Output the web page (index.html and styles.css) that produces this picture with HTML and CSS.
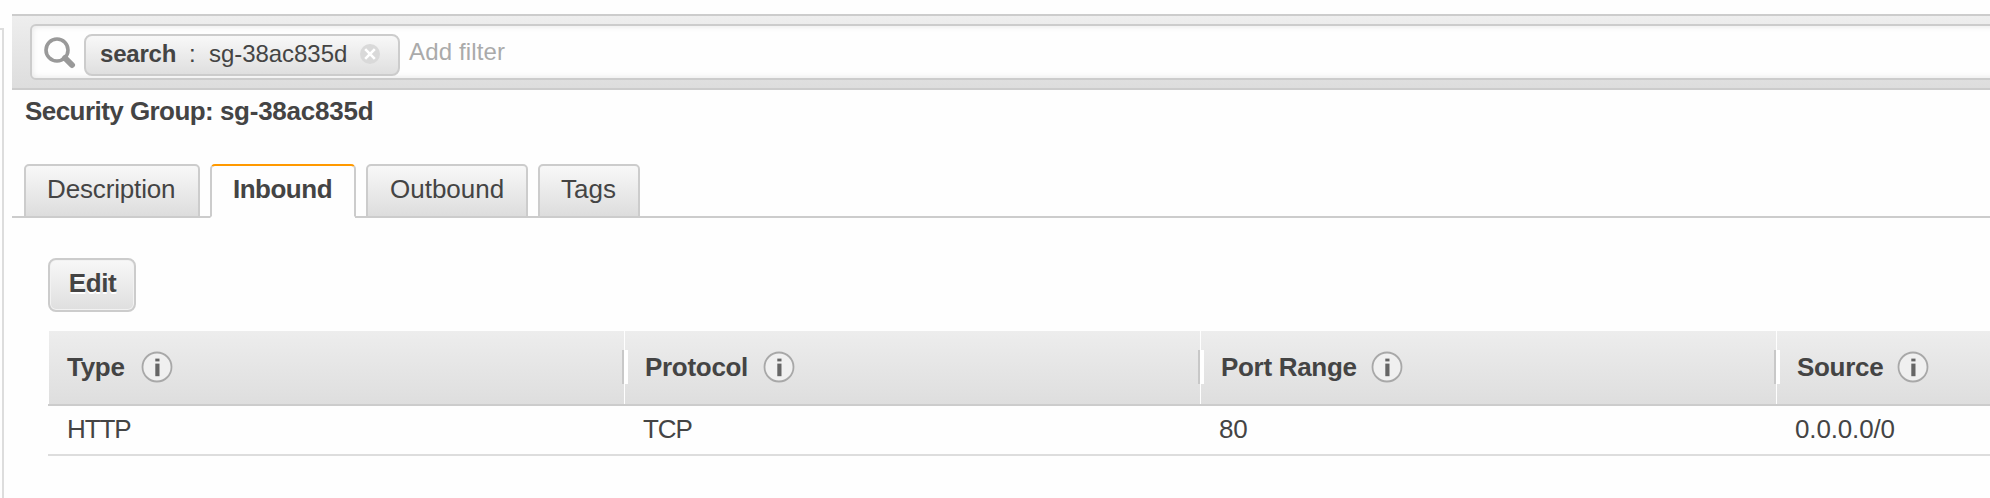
FILE: index.html
```html
<!DOCTYPE html>
<html lang="en">
<head>
<meta charset="utf-8">
<title>Security Groups</title>
<link rel="stylesheet" href="styles.css">
</head>
<body>
<svg class="defs" aria-hidden="true">
  <symbol id="info" viewBox="0 0 32 32">
    <circle cx="16" cy="16" r="14.5" fill="#f0f0f0" stroke="#a8a8a8" stroke-width="1.8"/>
    <rect x="14.3" y="7.6" width="4.2" height="2.8" fill="#666"/>
    <rect x="14.3" y="12.6" width="4.2" height="12.6" fill="#666"/>
  </symbol>
</svg>
<div class="app">
  <div class="side-edge"></div>
  <main class="content">
    <div class="toolbar">
      <div class="search-box">
        <svg class="search-icon" viewBox="0 0 32 32">
          <circle cx="13" cy="13" r="11" fill="none" stroke="#999" stroke-width="3.6"/>
          <path d="M21 21 L28 28" stroke="#999" stroke-width="6" stroke-linecap="round"/>
        </svg>
        <div class="chip">
          <span class="chip-key">search</span>
          <span class="chip-colon">:</span>
          <span class="chip-value">sg-38ac835d</span>
          <svg class="chip-close" viewBox="0 0 20 20">
            <circle cx="10" cy="10" r="10" fill="#d9d9d9"/>
            <path d="M5.2 5.2 L14.8 14.8 M14.8 5.2 L5.2 14.8" stroke="#fff" stroke-width="2.6"/>
          </svg>
        </div>
        <span class="placeholder">Add filter</span>
      </div>
    </div>
    <h1 class="title">Security Group: <span class="title-id">sg-38ac835d</span></h1>
    <nav class="tabs">
      <a class="tab tab-description">Description</a>
      <a class="tab tab-active">Inbound</a>
      <a class="tab tab-outbound">Outbound</a>
      <a class="tab tab-tags">Tags</a>
      <span class="tabs-rest"></span>
    </nav>
    <section class="panel">
      <button class="edit">Edit</button>
      <div class="table">
        <div class="row head">
          <div class="th"><span class="th-type">Type</span><svg class="info"><use href="#info"/></svg></div>
          <div class="th"><span class="th-protocol">Protocol</span><svg class="info"><use href="#info"/></svg></div>
          <div class="th"><span class="th-port">Port Range</span><svg class="info"><use href="#info"/></svg></div>
          <div class="th"><span class="th-source">Source</span><svg class="info"><use href="#info"/></svg></div>
        </div>
        <div class="row body">
          <div class="td td-caps">HTTP</div>
          <div class="td td-caps">TCP</div>
          <div class="td">80</div>
          <div class="td">0.0.0.0/0</div>
        </div>
      </div>
    </section>
  </main>
</div>
</body>
</html>
```
FILE: styles.css
```css
* { box-sizing: border-box; }

body {
  margin: 0;
  background: #fefefe;
  color: #444;
  font: 26px/30px "Liberation Sans", Arial, sans-serif;
  overflow: hidden;
}

.defs { display: none; }

.app { display: flex; width: 1990px; height: 498px; overflow: hidden; }

.side-edge {
  flex: none;
  width: 4px;
  margin: 28px 8px 0 0;
  border-top: 2px solid #ddd;
  border-right: 2px solid #ddd;
}

.content { flex: 1; min-width: 0; padding-top: 14px; }

.toolbar {
  height: 76px;
  padding: 8px 0 8px 18px;
  border-top: 2px solid #ccc;
  border-bottom: 2px solid #ccc;
  background: linear-gradient(#eee, #ddd);
}

.search-box {
  display: flex;
  height: 56px;
  margin-right: -12px;
  border: 2px solid #ccc;
  border-radius: 6px;
  background: #fefefe;
  box-shadow: inset 0 0 6px #e4e4e4;
}

.search-icon { width: 32px; height: 32px; margin: 11px 8px 0 12px; }

.chip {
  display: flex;
  width: 316px;
  height: 42px;
  margin-top: 8px;
  padding: 3px 0 0 14px;
  border: 2px solid #ccc;
  border-radius: 8px;
  background: linear-gradient(#f8f8f8, #dfdfdf);
  font-size: 24px;
}

.chip-key { width: 76px; font-weight: bold; letter-spacing: -0.2px; }
.chip-colon { width: 33px; padding-left: 13px; }
.chip-value { width: 149px; letter-spacing: -0.05px; }
.chip-value, .chip-colon, .chip-key { flex: none; }
.chip-close { width: 20px; height: 20px; margin: 5px 0 0 2px; }

.placeholder { margin: 11px 0 0 9px; color: #aaa; font-size: 24px; letter-spacing: 0.15px; }

.title {
  height: 30px;
  margin: 6px 0 38px 13px;
  font-size: 26px;
  line-height: 30px;
  letter-spacing: -0.55px;
}

.title-id { letter-spacing: -0.25px; }

.tabs { display: flex; height: 54px; }

.tabs::before { content: ""; width: 12px; border-bottom: 2px solid #ccc; }

.tab {
  position: relative;
  height: 54px;
  margin-right: 10px;
  padding: 8px 0 0 22px;
  border: 2px solid #ccc;
  border-radius: 5px 5px 0 0;
  background: linear-gradient(#f8f8f8, #ddd);
}

.tab::after {
  content: "";
  position: absolute;
  right: -12px;
  bottom: -2px;
  width: 10px;
  height: 2px;
  background: #ccc;
}

.tab-description { width: 176px; padding-left: 21px; letter-spacing: -0.15px; }
.tab-outbound { width: 162px; }
.tab-tags { width: 102px; padding-left: 21px; }

.tab-active {
  width: 146px;
  padding-left: 21px;
  border-top-color: #f90;
  border-bottom-color: transparent;
  background: #fefefe;
  font-weight: bold;
  letter-spacing: -0.5px;
}

.tab-active::after { width: 11px; }

.tabs-rest { flex: 1; border-bottom: 2px solid #ccc; }

.panel { padding: 40px 0 0 36px; }

.edit {
  display: block;
  width: 88px;
  height: 54px;
  padding: 0 0 5px 1px;
  border: 2px solid #ccc;
  border-radius: 8px;
  background: linear-gradient(#f8f8f8, #dfdfdf);
  box-shadow: inset 0 0 0 1px #f2f2f2;
  color: #444;
  font: bold 26px/30px "Liberation Sans", Arial, sans-serif;
  letter-spacing: -0.4px;
  text-shadow: 0 2px 0 #fff;
}

.table { margin-top: 19px; }

.row { display: grid; grid-template-columns: 576px 576px 576px 1fr; }

.head { height: 75px; border-bottom: 2px solid #ccc; }

.th {
  position: relative;
  display: flex;
  height: 73px;
  margin-left: 1px;
  padding: 20px 0 0 18px;
  background: linear-gradient(#ededed, #dedede);
  font-weight: bold;
  letter-spacing: -0.3px;
}

.th + .th { padding-left: 20px; }

.th + .th::before {
  content: "";
  position: absolute;
  left: -3px;
  top: 19px;
  width: 4px;
  height: 34px;
  border-left: 2px solid #c8c8c8;
  background: #fff;
}

.th span { flex: none; padding-top: 1px; }
.th-type { width: 74px; }
.th-protocol { width: 118px; }
.th-port { width: 150px; }
.th-source { width: 100px; }
.info { width: 32px; height: 32px; }

.body { height: 50px; border-bottom: 2px solid #ddd; }
.td { padding: 8px 0 0 19px; letter-spacing: -0.15px; }
.td-caps { letter-spacing: -1.1px; }
```
